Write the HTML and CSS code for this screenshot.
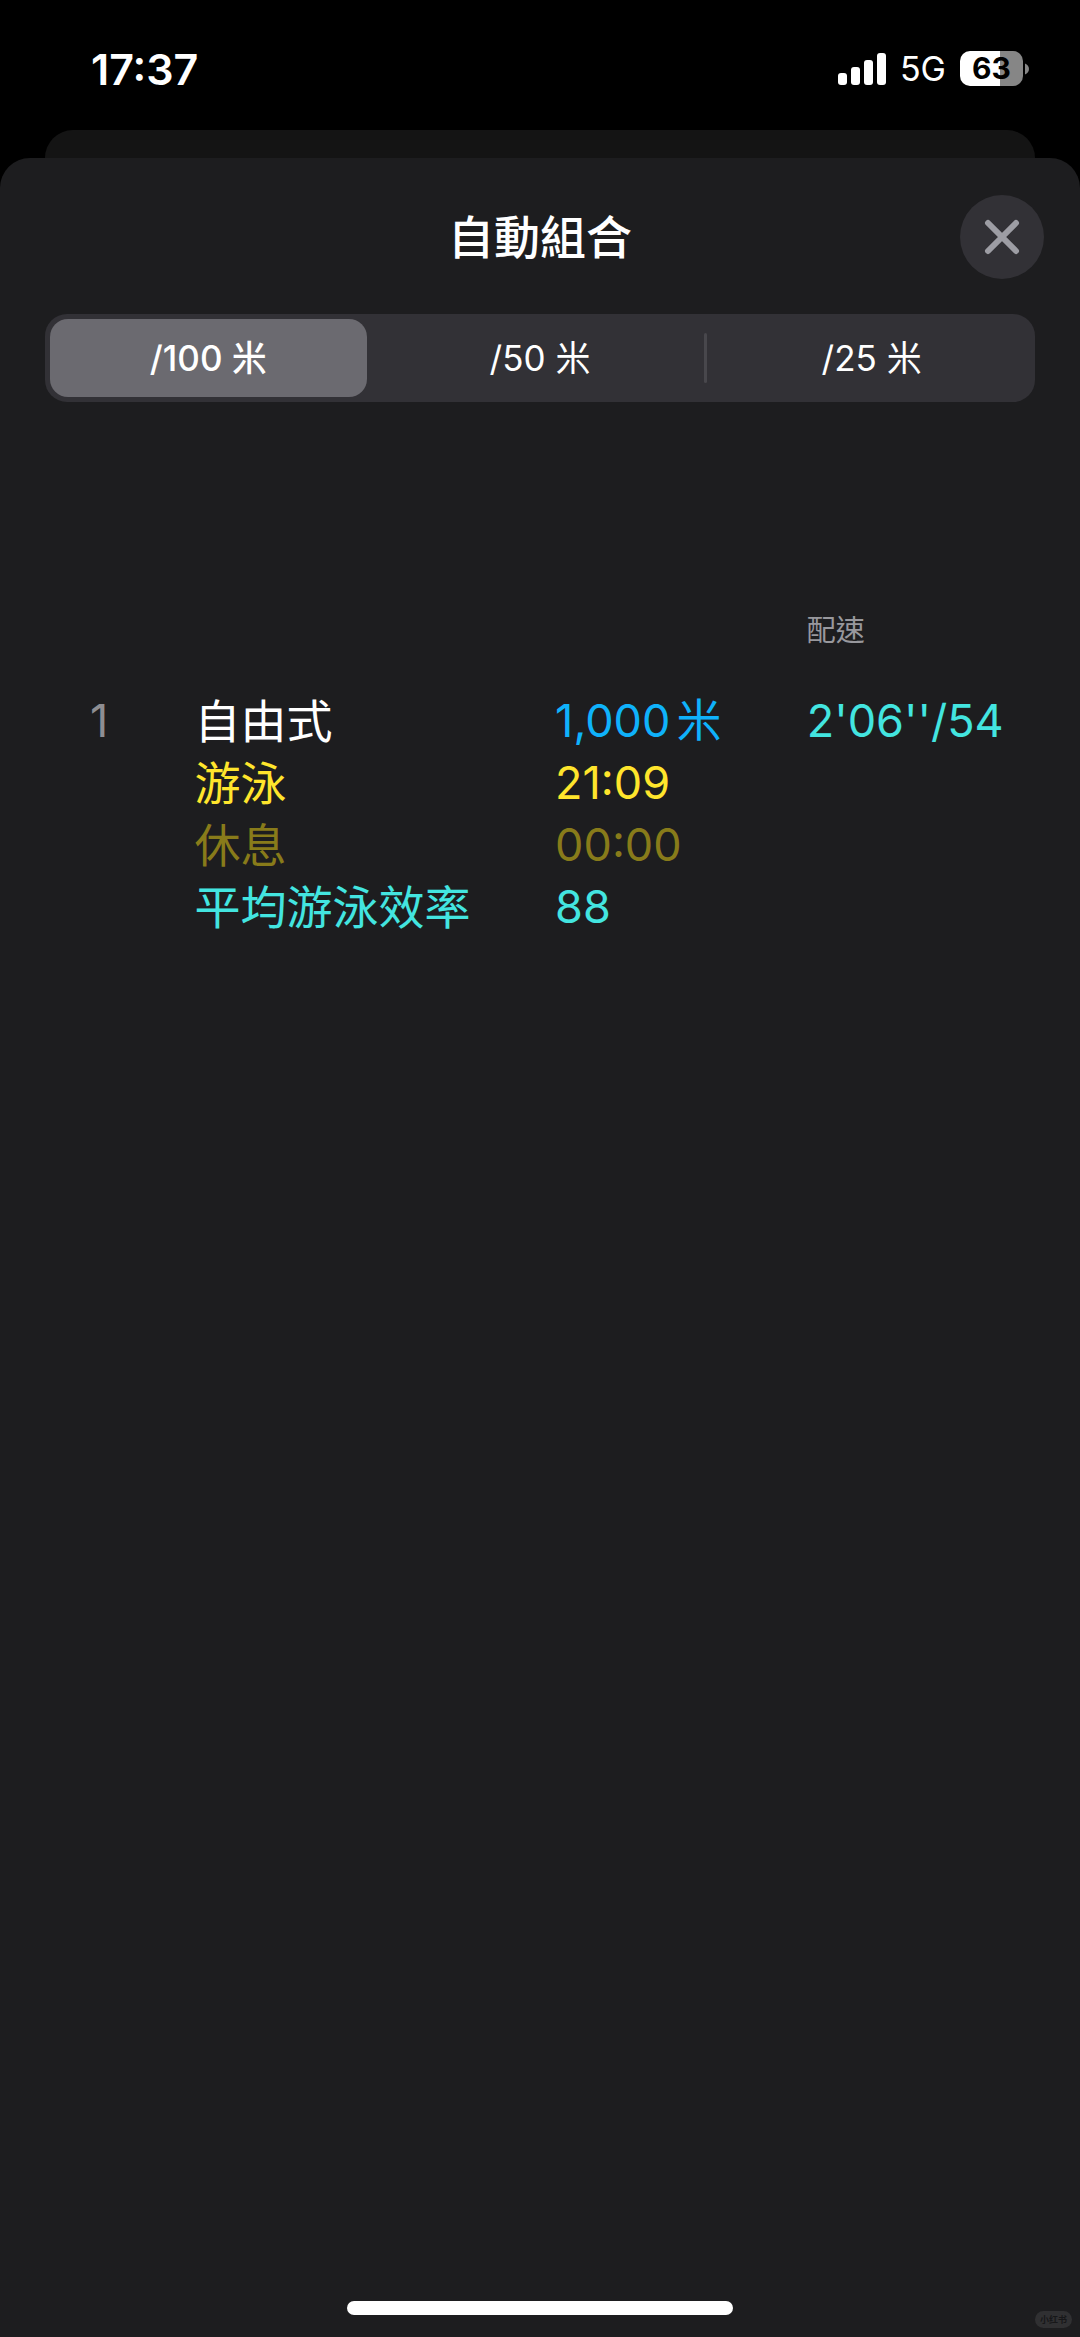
FILE: index.html
```html
<!DOCTYPE html>
<html lang="zh-Hant">
<head>
<meta charset="utf-8">
<meta name="viewport" content="width=device-width, initial-scale=1">
<title>自動組合</title>
<link rel="stylesheet" href="styles.css">
</head>
<body>
<div class="status-bar">
  <time class="clock">17:37</time>
  <div class="indicators">
    <svg class="signal" width="48" height="34" viewBox="0 0 48 34" fill="#fff" aria-hidden="true">
      <rect x="0" y="21" width="9" height="12" rx="3"/>
      <rect x="13" y="15" width="9" height="18" rx="3"/>
      <rect x="26" y="8" width="9" height="25" rx="3"/>
      <rect x="39" y="1" width="9" height="32" rx="3"/>
    </svg>
    <span class="network">5G</span>
    <span class="battery"><span class="battery-level">63</span><svg class="battery-cap" width="4" height="12" viewBox="0 0 4 12" aria-hidden="true"><path d="M0 0.500C2.500 1.500 4 3.500 4 6S2.500 10.500 0 11.500Z" fill="#868686"/></svg></span>
  </div>
</div>
<div class="sheet-behind"></div>
<main class="sheet">
  <header class="sheet-header">
    <h1 class="title">自動組合</h1>
    <button class="close" type="button" aria-label="關閉">
      <svg width="36" height="36" viewBox="0 0 36 36" fill="none" stroke="#9d9da4" stroke-width="6" stroke-linecap="round" aria-hidden="true"><path d="M4 4L32 32M32 4L4 32"/></svg>
    </button>
  </header>
  <div class="segments" role="radiogroup" aria-label="分段距離">
    <label class="segment"><input type="radio" name="split" checked><span>/100 米</span></label>
    <label class="segment"><input type="radio" name="split"><span>/50 米</span></label>
    <label class="segment divided"><input type="radio" name="split"><span>/25 米</span></label>
  </div>
  <table class="sets">
    <colgroup><col class="col-index"><col class="col-name"><col class="col-value"><col class="col-pace"></colgroup>
    <thead>
      <tr><td></td><td></td><td></td><th scope="col">配速</th></tr>
    </thead>
    <tbody>
      <tr><td class="index">1</td><th scope="row">自由式</th><td class="distance">1,000<span class="unit">米</span></td><td class="pace">2'06''/54</td></tr>
      <tr class="swim"><td></td><th scope="row">游泳</th><td>21:09</td><td></td></tr>
      <tr class="rest"><td></td><th scope="row">休息</th><td>00:00</td><td></td></tr>
      <tr class="swolf"><td></td><th scope="row">平均游泳效率</th><td>88</td><td></td></tr>
    </tbody>
  </table>
  <footer class="sheet-footer">
    <div class="home-indicator"></div>
    <span class="watermark">小红书</span>
  </footer>
</main>
</body>
</html>
```
FILE: styles.css
```css
* {
  box-sizing: border-box;
}

body {
  margin: 0;
  min-height: 100vh;
  display: flex;
  flex-direction: column;
  background: #000;
  color: #fff;
  font-family: Inter, "Noto Sans CJK TC", sans-serif;
}

.status-bar {
  display: flex;
  justify-content: space-between;
  align-items: center;
  height: 130px;
  padding: 7px 51px 0 91px;
}

.clock {
  font-size: 43px;
  font-weight: 600;
  line-height: 56px;
}

.indicators {
  display: flex;
  align-items: center;
  gap: 14px;
}

.network {
  font-size: 34px;
  line-height: 40px;
}

.battery {
  display: flex;
  align-items: center;
  gap: 2px;
}

.battery-level {
  width: 63px;
  height: 35px;
  border-radius: 10px;
  background: linear-gradient(to right, #fff 63%, #868686 63%);
  color: #000;
  font-size: 30px;
  font-weight: 700;
  line-height: 35px;
  text-align: center;
}

.sheet-behind {
  height: 28px;
  margin: 0 45px;
  border-radius: 28px 28px 0 0;
  background: #141414;
}

.sheet {
  flex: 1;
  display: flex;
  flex-direction: column;
  border-radius: 30px 30px 0 0;
  background: #1d1d1f;
}

.sheet-header {
  display: grid;
  grid-template-columns: 1fr auto 1fr;
  align-items: center;
  padding: 37px 36px 0;
}

.title {
  grid-column: 2;
  margin: 0;
  font-size: 46px;
  font-weight: 500;
  line-height: 60px;
}

.close {
  justify-self: end;
  display: flex;
  align-items: center;
  justify-content: center;
  width: 84px;
  height: 84px;
  padding: 0;
  border: 0;
  border-radius: 50%;
  background: #323136;
}

.segments {
  display: grid;
  grid-template-columns: repeat(3, 1fr);
  gap: 15px;
  margin: 35px 45px 0;
  padding: 5px;
  border-radius: 22px;
  background: #323136;
}

.segment {
  position: relative;
  border-radius: 18px;
  font-size: 35px;
  font-weight: 400;
  line-height: 78px;
  text-align: center;
}

.segment input {
  position: absolute;
  inset: 0;
  margin: 0;
  opacity: 0;
}

.segment:has(input:checked) {
  background: #6b6a70;
  font-weight: 500;
}

.divided::before {
  content: "";
  position: absolute;
  left: -9px;
  top: 14px;
  bottom: 14px;
  width: 3px;
  border-radius: 2px;
  background: #48474c;
}

.sets {
  width: 100%;
  margin-top: 194px;
  border-collapse: collapse;
  table-layout: fixed;
  font-size: 45px;
  line-height: 62px;
}

.col-index {
  width: 18%;
}

.col-name {
  width: 33.4%;
}

.col-value {
  width: 23.3%;
}

.sets td,
.sets th {
  padding: 0;
  font-weight: 400;
  text-align: left;
  white-space: nowrap;
}

.sets tbody th {
  font-size: 46px;
}

.sets thead th {
  padding-bottom: 24px;
  color: #98989d;
  font-size: 29px;
  line-height: 70px;
}

.sets .index {
  padding-left: 90px;
  color: #8e8e92;
}

.distance {
  color: #0fb2fb;
}

.unit {
  margin-left: 6px;
}

.pace,
.swolf {
  color: #43e5e0;
}

.swim {
  color: #ffe52c;
}

.rest {
  color: #887b1a;
}

.sheet-footer {
  position: relative;
  margin-top: auto;
  padding: 40px 0 22px;
}

.home-indicator {
  width: 386px;
  height: 14px;
  margin: 0 auto;
  border-radius: 7px;
  background: #fff;
}

.watermark {
  position: absolute;
  right: 8px;
  bottom: 9px;
  padding: 0 5px;
  border-radius: 9px;
  background: #303032;
  color: #171719;
  font-family: "Noto Sans CJK SC", sans-serif;
  font-size: 9px;
  font-weight: 700;
  line-height: 17px;
}
```
